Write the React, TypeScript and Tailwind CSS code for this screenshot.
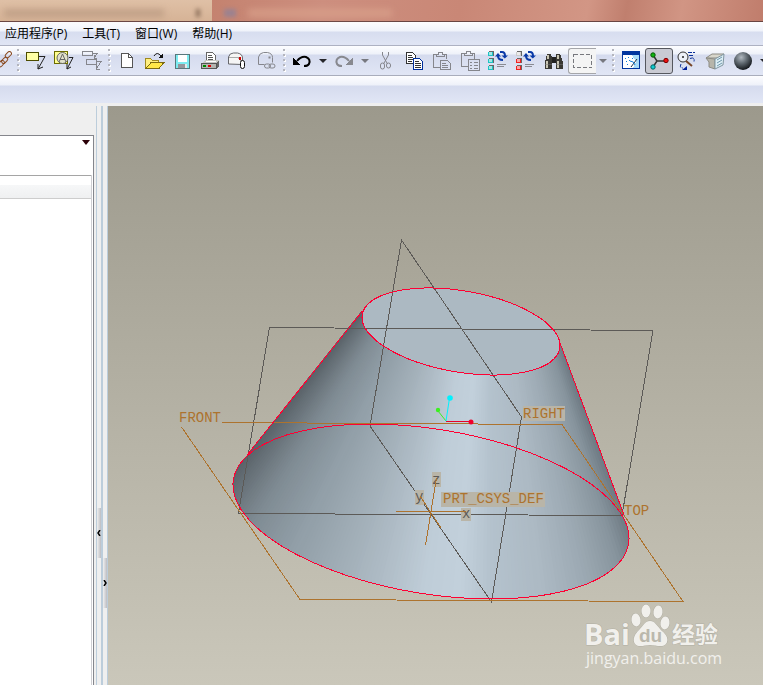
import type { ReactNode } from "react";

const menus = ["应用程序(P)", "工具(T)", "窗口(W)", "帮助(H)"];

function Icon({ children }: { children: ReactNode }) {
  return (
    <svg viewBox="0 0 20 20" className="h-5 w-5 shrink-0 overflow-visible" fill="none" shapeRendering="crispEdges" aria-hidden="true">
      {children}
    </svg>
  );
}

function ToolButton({ label, pressed, children }: { label: string; pressed?: boolean; children: ReactNode }) {
  return (
    <button
      type="button"
      aria-label={label}
      aria-pressed={pressed}
      className={
        pressed
          ? "flex h-[26px] w-7 shrink-0 items-center justify-center rounded-[3px] border border-[#55575e] bg-[#c9cad3]"
          : "flex h-[26px] w-7 shrink-0 items-center justify-center"
      }
    >
      {children}
    </button>
  );
}

function DropArrow({ label, muted }: { label: string; muted?: boolean }) {
  return (
    <button type="button" aria-label={label} className="flex h-[26px] w-3.5 shrink-0 items-center justify-center">
      <svg width="8" height="4" viewBox="0 0 8 4" aria-hidden="true">
        <path d="M0 0h8L4 4z" fill={muted ? "#77787f" : "#26262a"} />
      </svg>
    </button>
  );
}

function Grip() {
  return (
    <svg width="7" height="26" viewBox="0 0 7 26" className="shrink-0" shapeRendering="crispEdges" aria-hidden="true">
      {[1, 6, 11, 16, 21].map((y) => (
        <g key={y}>
          <rect x="3" y={y + 1} width="2" height="2" fill="#fff" />
          <rect x="2" y={y} width="2" height="2" fill="#b4b5bd" />
        </g>
      ))}
    </svg>
  );
}

function RegenIcon({ colors }: { colors: string[] }) {
  return (
    <Icon>
      {colors.map((c, i) => (
        <g key={i}>
          <rect x="1" y={i * 7} width="5" height="5" fill="#666" />
          <rect x="0" y={i * 7 + 1} width="5" height="4" fill={c} />
          <rect x="1" y={i * 7 + 1} width="3" height="3" fill="#fff" fillOpacity="0.600" />
        </g>
      ))}
      <g shapeRendering="auto">
        <path d="M12 1h2q3 0 3 4" stroke="#0a3aa8" strokeWidth="2" />
        <path d="M13.500 4.500h6.500l-3.200 3z" fill="#0a3aa8" />
        <path d="M10 5q0 4 5 4" stroke="#0a3aa8" strokeWidth="2" />
        <path d="M7 5.500l3-3.500 3 3.500z" fill="#0a3aa8" />
      </g>
      <path d="M9 13.500h9M9 15.500h7" stroke="#8a8b92" />
    </Icon>
  );
}

function Toolbar() {
  return (
    <div className="flex h-[30px] shrink-0 items-center overflow-hidden border-b border-[#a9adbc] bg-[linear-gradient(#fdfdff_0px,#eef1f9_8px,#d5dbee_9px,#e1e6f5_29px)]">
      <button type="button" aria-label="链接" className="flex h-[26px] w-[15px] shrink-0 items-center justify-start">
        <svg width="12" height="20" viewBox="3 0 12 20" fill="none" aria-hidden="true">
          <g stroke="#8a4a20">
            <rect x="1" y="11" width="7" height="4" rx="2" transform="rotate(-50 4 13)" />
            <rect x="4" y="7" width="7" height="4" rx="2" transform="rotate(-45 8 9)" />
            <rect x="8" y="2" width="7" height="4" rx="2" transform="rotate(-45 11 4)" />
          </g>
        </svg>
      </button>
      <Grip />
      <ToolButton label="注释">
        <Icon>
          <rect x="0.500" y="1.500" width="12" height="8" fill="#ffffa5" stroke="#4c4c00" />
          <path d="M13 5.500h6" stroke="#222" />
          <path d="M19 5.500L12 18M12 13v5l5-2" stroke="#222" shapeRendering="auto" />
        </Icon>
      </ToolButton>
      <ToolButton label="符号注释">
        <Icon>
          <rect x="0.500" y="0.500" width="13" height="12" fill="#ffff90" stroke="#6c6c00" />
          <g stroke="#666" shapeRendering="auto">
            <circle cx="8.500" cy="7" r="5.500" fill="#e2e2cc" />
            <path d="M5 11l3.500-8L12 11M6 8.500h5" />
          </g>
          <path d="M15 6.500h4L13 18M13 13v5l4-2" stroke="#222" shapeRendering="auto" />
        </Icon>
      </ToolButton>
      <ToolButton label="多重注释">
        <Icon>
          <g stroke="#85868c">
            <rect x="0.500" y="0.500" width="10" height="4" />
            <path d="M11 2.500h4l-3 5M12 4v3h3" />
            <rect x="4.500" y="8.500" width="10" height="5" />
            <path d="M15 10.500h4l-5 8M14 14v4h4" />
          </g>
        </Icon>
      </ToolButton>
      <Grip />
      <ToolButton label="新建">
        <Icon>
          <path d="M4.500 2.500h7l4 4v10h-11z" fill="#fff" stroke="#555" />
          <path d="M11.500 2.500v4h4" stroke="#555" />
        </Icon>
      </ToolButton>
      <ToolButton label="打开">
        <Icon>
          <path d="M0.500 17V7.500h5l2 2h6v3" fill="#ffef80" stroke="#a08a20" />
          <path d="M1 17.500L6 11.500h13l-5 6z" fill="#ffe748" stroke="#7c6a10" />
          <path d="M9 5q3-5 7 0" stroke="#111" shapeRendering="auto" />
          <path d="M18 2v5h-5z" fill="#111" />
        </Icon>
      </ToolButton>
      <ToolButton label="保存">
        <Icon>
          <rect x="2.500" y="3.500" width="14" height="14" fill="#7cebf0" stroke="#58777c" />
          <rect x="5" y="4" width="9" height="7" fill="#fff" />
          <rect x="5" y="13" width="9" height="4" fill="#95959b" />
          <rect x="12" y="13" width="2" height="4" fill="#e6e6e8" />
        </Icon>
      </ToolButton>
      <ToolButton label="打印">
        <Icon>
          <path d="M5.500 11V1.500h6l3 3V11" fill="#fff" stroke="#666" />
          <path d="M7 4.500h4M7 6.500h5M7 8.500h5" stroke="#555" />
          <path d="M1 12l3-3h14l-2 3z" fill="#c8c8c4" />
          <path d="M5 10.500h10" stroke="#fff" />
          <rect x="0.500" y="12.500" width="15" height="5" fill="#b5b5b0" stroke="#555" />
          <path d="M16 12l2-3v6l-2 3z" fill="#666" />
          <rect x="2" y="14" width="3" height="2" fill="#080" />
          <rect x="7" y="14" width="3" height="2" fill="#d00" />
        </Icon>
      </ToolButton>
      <ToolButton label="邮寄附件">
        <Icon>
          <path d="M-0.500 13V6q1-4 5-4h4q5 1 5 5v6.500z" fill="#f5f5f5" stroke="#66676c" shapeRendering="auto" />
          <path d="M0 6.500h9l4 4" stroke="#aaa" />
          <rect x="10" y="6" width="2" height="3" fill="#c00" />
          <rect x="11.500" y="9.500" width="4" height="8" rx="2" fill="#fff" stroke="#111" shapeRendering="auto" />
        </Icon>
      </ToolButton>
      <ToolButton label="邮寄链接">
        <Icon>
          <g stroke="#85868c" shapeRendering="auto">
            <path d="M1.500 13.500V6q1-4 5-4.500h4q5 1 5 5v5M1.500 13.500h6" />
            <rect x="12" y="6" width="1" height="1" />
            <rect x="7.500" y="13" width="6" height="4" rx="2" />
            <rect x="12" y="13" width="6" height="4" rx="2" />
          </g>
        </Icon>
      </ToolButton>
      <Grip />
      <ToolButton label="撤消">
        <Icon>
          <path d="M5 10Q9 5 14 6q5 2 3 7-1 2-5 2" stroke="#000" strokeWidth="2" shapeRendering="auto" />
          <path d="M1 7v7h8z" fill="#000" />
        </Icon>
      </ToolButton>
      <DropArrow label="撤消列表" />
      <ToolButton label="重做">
        <Icon>
          <path d="M15 10Q11 5 6 6q-5 2-3 7 1 2 5 2" stroke="#88898f" strokeWidth="2" shapeRendering="auto" />
          <path d="M19 7v7h-8z" fill="#88898f" />
        </Icon>
      </ToolButton>
      <DropArrow label="重做列表" muted />
      <ToolButton label="剪切">
        <Icon>
          <g stroke="#85868c" shapeRendering="auto">
            <path d="M6.500 1v3l5 9M12.500 1v3l-5 9" />
            <rect x="4.500" y="12" width="4" height="6" rx="2" />
            <rect x="10.500" y="12" width="4" height="5" rx="2" />
          </g>
        </Icon>
      </ToolButton>
      <ToolButton label="复制">
        <Icon>
          <path d="M2.500 1.500h6l3 3v8h-9z" fill="#fff" stroke="#333" />
          <path d="M4 4.500h4M4 6.500h5M4 8.500h5M4 10.500h4" stroke="#333" />
          <path d="M9.500 7.500h6l3 3v8h-9z" fill="#fff" stroke="#002f9c" />
          <path d="M11 10.500h4M11 12.500h6M11 14.500h6M11 16.500h6" stroke="#333" />
        </Icon>
      </ToolButton>
      <ToolButton label="粘贴">
        <Icon>
          <g stroke="#85868c">
            <path d="M8 16.500H1.500v-13h3M12 3.500h2.500V8" />
            <path d="M4.500 5.500v-2h2v-2h4v2h2v2z" />
            <path d="M8.500 9.500h7l3 3v6h-10zM10 12.500h4M10 14.500h6M10 16.500h6" />
          </g>
        </Icon>
      </ToolButton>
      <ToolButton label="选择性粘贴">
        <Icon>
          <g stroke="#85868c">
            <path d="M8 15.500H1.500v-13h3M12 2.500h2.500V8" />
            <path d="M4.500 4.500v-2h2v-2h4v2h2v2z" />
            <rect x="8.500" y="8.500" width="11" height="11" />
            <path d="M10 11.500h2M10 14.500h2M10 17.500h2M14 11.500h4M14 14.500h4M14 17.500h4" />
          </g>
        </Icon>
      </ToolButton>
      <ToolButton label="再生">
        <RegenIcon colors={["#1cc4c4", "#1cc4c4", "#1cc4c4"]} />
      </ToolButton>
      <ToolButton label="再生管理器">
        <RegenIcon colors={["#ccc", "#f02020", "#f02020"]} />
      </ToolButton>
      <ToolButton label="查找">
        <Icon>
          <path d="M3 3h4l1 4v11H1v-7zM12 3h4l3 8v7h-7V7z" fill="#3a3934" />
          <rect x="8" y="6" width="4" height="6" fill="#222" />
          <path d="M4 4v4M3 10v7M14 4v4M14 10v7" stroke="#c9c6b4" strokeWidth="2" />
          <path d="M1 13h7M12 13h7" stroke="#777" strokeWidth="0.500" />
        </Icon>
      </ToolButton>
      <button
        type="button"
        aria-label="选取框"
        className="flex h-[26px] w-7 shrink-0 items-center justify-center rounded-l-[3px] border border-r-0 border-[#a5a6aa] bg-[#f4f4f4]"
      >
        <Icon>
          <rect x="0.500" y="3.500" width="18" height="13" stroke="#77787d" strokeDasharray="4 2" />
        </Icon>
      </button>
      <DropArrow label="选取方式" muted />
      <Grip />
      <ToolButton label="重画">
        <Icon>
          <rect x="1.500" y="0.500" width="17" height="17" fill="#a9dcf7" stroke="#00359e" />
          <rect x="1" y="0" width="18" height="4" fill="#00359e" />
          <path d="M2 4h9l4 7-3 6H2z" fill="#fff" />
          <path d="M16 8l-6 8" stroke="#234" shapeRendering="auto" />
          <path d="M9 10q4 0 5 4" stroke="#1480d8" shapeRendering="auto" />
          <path d="M4 7.500h1M7 6.500h1M5 10.500h1M8 9.500h1M6 13.500h1M11 7.500h1" stroke="#1480d8" />
        </Icon>
      </ToolButton>
      <ToolButton label="旋转中心" pressed>
        <Icon>
          <g shapeRendering="auto">
            <path d="M4 4l4 6-4 6M8 10h10" stroke="#333" strokeWidth="1.500" />
            <circle cx="4" cy="4" r="2.200" fill="#10b510" stroke="#075807" />
            <circle cx="4" cy="16" r="2.200" fill="#10cbd0" stroke="#066" />
            <circle cx="17" cy="9.500" r="2.200" fill="#ed1010" stroke="#700" />
          </g>
        </Icon>
      </ToolButton>
      <ToolButton label="定向模式">
        <Icon>
          <g shapeRendering="auto">
            <circle cx="6" cy="6" r="5" fill="#eef1f8" stroke="#333" />
            <circle cx="6" cy="6" r="1" fill="#222" />
            <path d="M9 10l6 5" stroke="#774628" strokeWidth="2" />
            <path d="M11 1.500h7M12 4.500h4M13 7.500q5-2 4 3M4 13q-2 4 2 4" stroke="#0a2f99" strokeDasharray="4 1" />
            <path d="M5 19h5v-4z" fill="#001f99" />
          </g>
        </Icon>
      </ToolButton>
      <ToolButton label="外观">
        <Icon>
          <g shapeRendering="auto">
            <path d="M1 7l6-4h12l-5 4z" fill="#d8d6cb" stroke="#8d8c84" />
            <path d="M1 7l3 4v5l6 2V8z" fill="#b7b5aa" stroke="#8d8c84" />
            <path d="M10 8l9-5-1 11-8 4z" fill="#ddeef5" stroke="#8196a0" />
            <path d="M12 9l5-3M12 12l5-3M12 15l5-3" stroke="#7199ac" />
          </g>
        </Icon>
      </ToolButton>
      <ToolButton label="着色">
        <Icon>
          <defs>
            <radialGradient id="ball" cx="0.400" cy="0.300" r="0.700">
              <stop offset="0" stopColor="#b1b9c0" />
              <stop offset="0.500" stopColor="#5d666d" />
              <stop offset="1" stopColor="#14181c" />
            </radialGradient>
          </defs>
          <circle cx="10" cy="10" r="9" fill="url(#ball)" shapeRendering="auto" />
        </Icon>
      </ToolButton>
      <DropArrow label="显示样式" />
    </div>
  );
}

// Shading of the cone side: slope of the ray from the apex -> colour
const apex = { x: 489, y: 152 };
const shades: [number, number[]][] = [
  [-0.81, [88, 96, 102]],
  [-0.74, [104, 114, 121]],
  [-0.64, [127, 139, 147]],
  [-0.5, [145, 158, 167]],
  [-0.35, [162, 175, 184]],
  [-0.24, [177, 190, 200]],
  [-0.15, [191, 205, 216]],
  [-0.07, [194, 208, 219]],
  [0, [180, 194, 205]],
  [0.12, [172, 185, 195]],
  [0.22, [156, 169, 179]],
  [0.31, [135, 148, 157]],
  [0.38, [104, 116, 124]],
];

function shadeAt(k: number) {
  let i = 0;
  while (i < shades.length - 2 && shades[i + 1][0] < k) i++;
  const [k0, a] = shades[i];
  const [k1, b] = shades[i + 1];
  const t = Math.min(1, Math.max(0, (k - k0) / (k1 - k0)));
  return `rgb(${a.map((v, n) => Math.round(v + (b[n] - v) * t)).join(",")})`;
}

const STEPS = 160;
const wedges = Array.from({ length: STEPS }, (_, i) => {
  const k = -0.9 + (1.35 * i) / STEPS;
  const x0 = apex.x + k * 460;
  return { points: `${apex.x},${apex.y} ${x0},${apex.y + 460} ${apex.x + 0.46 * 460},${apex.y + 460}`, fill: shadeAt(k) };
});

const labels = [
  { text: "FRONT", x: 179, y: 422 },
  { text: "RIGHT", x: 523, y: 418, box: [523, 406, 42, 15] },
  { text: "TOP", x: 624, y: 515 },
  { text: "PRT_CSYS_DEF", x: 443, y: 503, box: [441, 492, 104, 15] },
];

function Watermark() {
  return (
    <g fill="#f1f0ec" stroke="#b1afa4" paintOrder="stroke">
      <text x="584" y="645" fontSize="29" fontWeight="700" className="font-['Open_Sans',sans-serif]">Bai</text>
      <ellipse cx="636" cy="620" rx="4.500" ry="6.500" transform="rotate(-8 636 620)" />
      <ellipse cx="646" cy="611" rx="4.500" ry="6.500" />
      <ellipse cx="658" cy="612" rx="4.500" ry="6.500" transform="rotate(8 658 612)" />
      <ellipse cx="665" cy="623" rx="4.500" ry="6.500" transform="rotate(8 665 623)" />
      <path d="M650 621c5 0 7 5 12 10 5 4 7 9 4 13-4 4-10 1-16 1s-11 3-15-1c-3-5 0-10 4-14 4-4 6-9 11-9z" />
      <text x="639" y="642" fontSize="19" fontWeight="700" fill="#bbb8ac" stroke="none" className="font-['Liberation_Sans',sans-serif]">du</text>
      <text x="672" y="643" fontSize="23" fontWeight="700" className="font-['Noto_Sans_CJK_SC',sans-serif]">经验</text>
      <text x="586" y="664" fontSize="16" stroke="none" className="font-['Open_Sans',sans-serif]">jingyan.baidu.com</text>
    </g>
  );
}

function Model() {
  return (
    <svg viewBox="108 106 655 579" preserveAspectRatio="xMinYMin meet" className="h-full w-full" fill="none" role="img" aria-label="PRT_CSYS_DEF">
      <defs>
        <clipPath id="cone">
          <ellipse cx="431" cy="511.500" rx="200" ry="82.200" transform="rotate(9.270 431 511.500)" />
          <path d="M362 311L247 455L431 530L624 515L560 343Z" />
        </clipPath>
      </defs>
      <g clipPath="url(#cone)">
        {wedges.map((w, i) => (
          <polygon key={i} points={w.points} fill={w.fill} />
        ))}
      </g>
      <ellipse cx="461" cy="331.500" rx="100.200" ry="40.600" transform="rotate(9.750 461 331.500)" fill="#acb9c2" />

      <g stroke="#5c5a57" shapeRendering="crispEdges">
        <path d="M269.500 327.500L653 330.500L622 515.500L238.500 513.500Z" />
        <path d="M401.500 240L521.500 417L491.500 602L370 426Z" />
      </g>
      <path d="M222 422.500L562 424.500L683 601.500L300 599.500L181.500 427" stroke="#ad732e" shapeRendering="crispEdges" />
      <g stroke="#ff0033" shapeRendering="crispEdges">
        <ellipse cx="461" cy="331.500" rx="100.200" ry="40.600" transform="rotate(9.750 461 331.500)" />
        <ellipse cx="431" cy="511.500" rx="200.200" ry="82.400" transform="rotate(9.270 431 511.500)" />
        <path d="M362.500 311L247 455M560 343L624 515" />
      </g>

      <path d="M446 421.500h25" stroke="#e8002c" />
      <path d="M446 421L438 411" stroke="#3cf020" />
      <path d="M446 421L449.500 398" stroke="#00f2ff" />
      <circle cx="471" cy="422" r="2.500" fill="#f0002c" />
      <circle cx="438" cy="410" r="2.200" fill="#3cf020" />
      <circle cx="450" cy="398" r="2.800" fill="#00f2ff" />

      <g fontSize="14" fill="#ad732e" className="font-['Liberation_Mono',monospace]">
        {labels.map(({ text, x, y, box }) => (
          <g key={text}>
            {box && <rect x={box[0]} y={box[1]} width={box[2]} height={box[3]} fill="#b9b5a8" />}
            <text x={x} y={y}>{text}</text>
          </g>
        ))}
      </g>
      <g fontSize="14" fill="#5c5a57" className="font-['Liberation_Mono',monospace]">
        <rect x="432" y="472" width="9" height="15" fill="#b9b5a8" />
        <text x="432" y="484">z</text>
        <rect x="415" y="490" width="9" height="15" fill="#b9b5a8" />
        <text x="415" y="501">y</text>
        <rect x="461" y="508" width="10" height="13" fill="#b9b5a8" />
        <text x="462" y="518">x</text>
      </g>
      <path d="M396 511.500h70M436.500 478L425.500 545M420 496l21 32" stroke="#ad732e" shapeRendering="crispEdges" />
      <Watermark />
    </svg>
  );
}

export default function App() {
  return (
    <div className="flex h-screen flex-col overflow-hidden bg-[#efefef] text-xs text-black font-['Open_Sans','Noto_Sans_CJK_SC',sans-serif]">
      <header className="flex h-[22px] shrink-0 border-b border-[#694542] bg-[#cb8b7b]">
        <div className="flex w-[212px] items-end bg-[linear-gradient(#dfc0a6,#d6b396)] px-1 pb-1">
          <div className="h-2 w-40 bg-[#a98a74]/50 blur-[3px]" />
          <div className="ml-8 h-2 w-1 bg-[#8a6d58] blur-[2px]" />
        </div>
        <div className="flex flex-1 items-end gap-3 bg-[linear-gradient(100deg,#c4826f,#cd8f7f_20%,#c98776_45%,#d29685_68%,#c07f6e_75%,#d19584_85%,#c07d6c)] px-3 pb-1">
          <div className="h-2 w-3 bg-[#9b8290] blur-[2px]" />
          <div className="h-2 w-36 bg-[#dda78f]/60 blur-[3px]" />
        </div>
      </header>

      <nav className="flex h-6 shrink-0 items-center gap-[15px] border-b border-[#adb1c2] bg-[linear-gradient(#fdfdff_0px,#f0f3fa_9px,#d7ddef_10px,#e0e5f4_23px)] px-[5px]">
        {menus.map((m) => (
          <button key={m} type="button" className="whitespace-nowrap leading-4">
            {m}
          </button>
        ))}
      </nav>
      <Toolbar />
      <div className="h-[27px] shrink-0 bg-[linear-gradient(#fdfdff_0px,#eef1f9_9px,#d5dbee_10px,#e1e6f5_27px)]" />

      <main className="flex min-h-0 flex-1 pt-[3px]">
        <aside className="flex w-24 shrink-0 flex-col pt-[29px] pr-0.5">
          <div className="flex flex-1 flex-col border-t border-r border-[#85868c] bg-white pr-px">
            <div className="flex h-[39px] shrink-0 items-start justify-end py-1 pr-0.5">
              <button type="button" aria-label="显示">
                <svg width="8" height="5" viewBox="0 0 8 5" aria-hidden="true">
                  <path d="M0 0h8L4 5z" fill="#2b0008" />
                </svg>
              </button>
            </div>
            <div className="flex flex-1 flex-col border-r border-[#cfcfd3]">
              <div className="h-6 shrink-0 border-t border-b border-t-[#a5a5a5] border-b-[#cdcdcd] bg-[linear-gradient(#fff_40%,#f6f7f8_41%,#eff0f1)]" />
            </div>
          </div>
        </aside>
        <div className="w-[5px] shrink-0 border-l border-[#bccddb] pt-[402px]">
          <button type="button" aria-label="收起" className="flex h-[50px] w-full items-center justify-center bg-[linear-gradient(90deg,#efefef,#bdbdc2)]">
            <svg width="4" height="6" viewBox="0 0 4 6" fill="none" aria-hidden="true">
              <path d="M3 0L1 3l2 3" stroke="#000" strokeWidth="1.500" />
            </svg>
          </button>
        </div>
        <div className="w-[7px] shrink-0 border-r border-l-2 border-r-[#bccddb] border-l-[#bccddb] pt-[452px]">
          <button type="button" aria-label="展开" className="flex h-[50px] w-full items-center justify-center bg-[linear-gradient(90deg,#efefef,#bdbdc2)]">
            <svg width="4" height="6" viewBox="0 0 4 6" fill="none" aria-hidden="true">
              <path d="M1 0l2 3-2 3" stroke="#000" strokeWidth="1.500" />
            </svg>
          </button>
        </div>
        <section className="min-w-0 flex-1 bg-[linear-gradient(#9c998c,#cac7ba)]">
          <Model />
        </section>
      </main>
    </div>
  );
}
